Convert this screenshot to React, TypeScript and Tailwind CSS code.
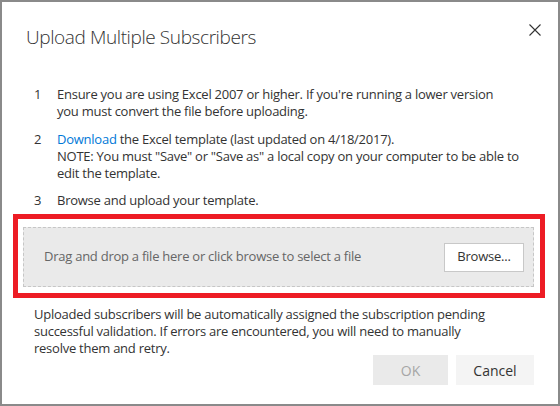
import React from "react";

export default function App() {
  return (
    <div
      className="w-[560px] h-[406px] border-2 border-[#8a8a8a] bg-white text-[#333333] flex flex-col"
      style={{ fontFamily: '"Open Sans", "Noto Sans", sans-serif' }}
    >
      <div className="flex items-start justify-between pl-[24px] pr-[17px] pt-[21px]">
        <h1 className="text-[19px] leading-[28px] font-light tracking-[-0.4px] text-[#333333]">
          Upload Multiple Subscribers
        </h1>
        <button className="mt-[1px] w-[12px] h-[12px] flex items-center justify-center text-[#333333]" aria-label="Close">
          <svg width="12" height="12" viewBox="0 0 12 12" fill="none" stroke="currentColor" strokeWidth="1.1">
            <path d="M0.5 0.5 L11.5 11.5 M11.5 0.5 L0.5 11.5" />
          </svg>
        </button>
      </div>

      <ol className="mt-[35px] pl-[32px] text-[13px] leading-[17px] tracking-[-0.25px] flex flex-col">
        <li className="flex">
          <span className="w-[23px] shrink-0">1</span>
          <span>
            Ensure you are using Excel 2007 or higher. If you're running a lower version
            <br />
            you must convert the file before uploading.
          </span>
        </li>
        <li className="flex mt-[11px]">
          <span className="w-[23px] shrink-0">2</span>
          <span>
            <a className="text-[#0078d7]">Download</a> the Excel template (last updated on 4/18/2017).
            <br />
            NOTE: You must "Save" or "Save as" a local copy on your computer to be able to
            <br />
            edit the template.
          </span>
        </li>
        <li className="flex mt-[10px]">
          <span className="w-[23px] shrink-0">3</span>
          <span>Browse and upload your template.</span>
        </li>
      </ol>

      <div className="mt-[5px] ml-[11px] w-[532px] h-[84px] border-[5px] border-[#ed1c24] pt-[8px] pl-[5px]">
        <div className="w-[511px] h-[60px] border border-dashed border-[#c6c6c6] bg-[#eaeaea] flex items-center justify-between pl-[20px] pr-[9px]">
          <span className="text-[13px] tracking-[-0.25px] text-[#666666]">
            Drag and drop a file here or click browse to select a file
          </span>
          <button className="w-[80px] h-[29px] bg-white border border-[#c8c8c8] text-[13px] tracking-[-0.2px] text-[#333333]">
            Browse...
          </button>
        </div>
      </div>

      <p className="mt-[8px] pl-[32px] text-[13px] leading-[17px] tracking-[-0.25px]">
        Uploaded subscribers will be automatically assigned the subscription pending
        <br />
        successful validation. If errors are encountered, you will need to manually
        <br />
        resolve them and retry.
      </p>

      <div className="-mt-[2px] flex justify-end gap-[8px] pr-[24px]">
        <button className="w-[75px] h-[30px] bg-[#eaeaea] text-[14px] text-[#a6a6a6]">OK</button>
        <button className="w-[78px] h-[30px] bg-[#f4f4f4] text-[14px] text-[#333333]">Cancel</button>
      </div>
    </div>
  );
}
